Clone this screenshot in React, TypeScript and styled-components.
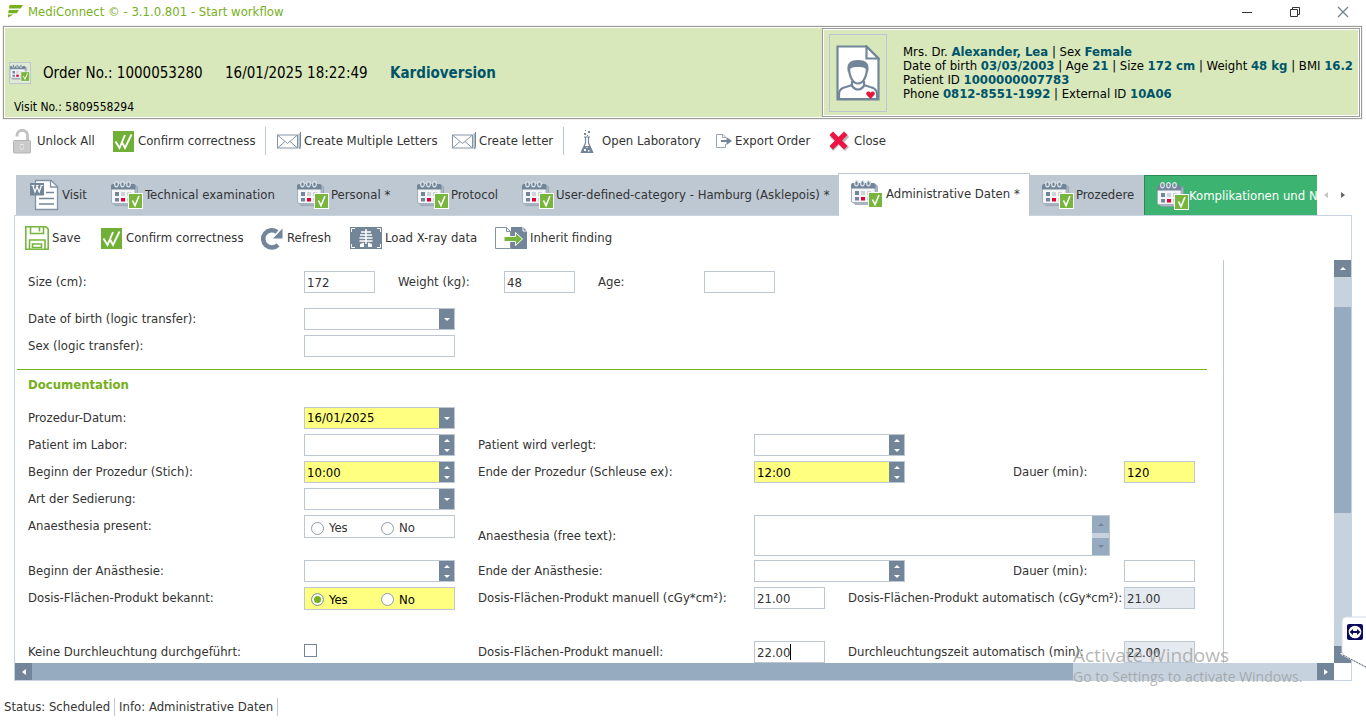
import React, { useState } from "react";
import styled, { createGlobalStyle, css } from "styled-components";

const c = {
  green: "#76b01c",
  iconGreen: "#77b53c",
  slate: "#738699",
  steel: "#96abc0",
  track: "#c6d2de",
  line: "#bcc7d2",
  tab: "#bdc8d3",
  header: "#d8e8bb",
  teal: "#00546a",
  text: "#333333",
  yellow: "#ffff80",
};

const Global = createGlobalStyle`
  *, *::before, *::after { box-sizing: border-box; }
  body {
    margin: 0;
    background: #ffffff;
    color: ${c.text};
    font-family: "DejaVu Sans Condensed", "DejaVu Sans", Tahoma, sans-serif;
    font-size: 13px;
    line-height: 18px;
  }
  button, input, select, textarea { font: inherit; color: inherit; margin: 0; }
  button { border: 0; padding: 0; background: none; cursor: pointer; }
  svg { display: block; flex: none; }
`;

const Page = styled.div`
  position: relative;
  display: flex;
  flex-direction: column;
  min-height: 100vh;
  overflow: hidden;
`;

/* ---------- title bar ---------- */

const TitleBar = styled.header`
  display: flex;
  align-items: center;
  height: 24px;
  padding: 0 17px 0 7px;
  color: ${c.green};
`;
const TitleText = styled.h1`
  flex: 1;
  margin: 0 0 0 5px;
  font-size: 13px;
  font-weight: 400;
`;
const WindowButtons = styled.div`
  display: flex;
  gap: 36px;
`;
const WindowButton = styled.button`
  width: 12px;
  height: 12px;
  color: #333;
`;

/* ---------- order header ---------- */

const framed = css`
  border: 1px solid #999c97;
  padding: 1px;
  box-shadow: inset 0 0 0 1px #ffffff;
  background: ${c.header};
`;
const OrderHeader = styled.section`
  ${framed}
  display: flex;
  height: 93px;
  margin: 2px 4px 0 3px;
  outline: 1px solid #f0f0f0;
  color: #000000;
`;
const OrderInfo = styled.div`
  flex: 1;
  min-width: 0;
`;
const OrderLine = styled.div`
  display: flex;
  align-items: center;
  height: 22px;
  margin: 34px 0 0 4px;
  font-size: 15px;
  line-height: 20px;
`;
const OrderIcon = styled.span`
  display: grid;
  place-items: center;
  width: 22px;
  height: 22px;
  margin-right: 12px;
  border: 1px solid ${c.line};
  background: #dfe9d3;
`;
const OrderNo = styled.span`
  width: 182px;
`;
const OrderDate = styled.span`
  width: 165px;
`;
const OrderName = styled.strong`
  color: ${c.teal};
`;
const VisitNo = styled.div`
  margin: 14px 0 0 9px;
  font-size: 12px;
`;
const PatientPanel = styled.aside`
  ${framed}
  display: flex;
  width: 538px;
`;
const PatientPhoto = styled.div`
  display: grid;
  place-items: center;
  width: 58px;
  height: 78px;
  margin: 4px 16px 0 5px;
  border: 1px solid ${c.line};
`;
const PatientLines = styled.div`
  padding-top: 15px;
  line-height: 14px;
  white-space: nowrap;

  b {
    color: ${c.teal};
  }
`;

/* ---------- toolbars ---------- */

const Toolbar = styled.nav<{ $start: number }>`
  display: flex;
  align-items: center;
  height: 44px;
  padding-left: ${(p) => p.$start}px;
`;
const ToolButton = styled.button<{ $width: number; $icon: number }>`
  display: grid;
  grid-template-columns: ${(p) => p.$icon}px 1fr;
  align-items: center;
  width: ${(p) => p.$width}px;
  height: 28px;
  text-align: left;
  white-space: nowrap;
`;
const Separator = styled.span`
  width: 1px;
  height: 28px;
  margin-right: 11px;
  background: ${c.line};
`;
const FlaskSlot = styled.span`
  padding-left: 5px;
`;

/* ---------- tabs ---------- */

const TabArea = styled.div`
  display: flex;
  align-items: flex-end;
  height: 42px;
  margin: 10px 14px 0 16px;
`;
const Tabs = styled.div`
  flex: 1;
  display: flex;
  align-items: flex-end;
  min-width: 0;
  height: 43px;
  margin-bottom: -1px;
  padding-bottom: 1px;
  overflow: hidden;
  position: relative;
`;
const Tab = styled.button<{ $width?: number; $active?: boolean; $accent?: boolean }>`
  display: flex;
  align-items: center;
  gap: 2px;
  height: 40px;
  padding-left: 12px;
  white-space: nowrap;
  background: ${c.tab};
  ${(p) => (p.$width ? `flex: 0 0 ${p.$width}px;` : "flex: 1 0 0; min-width: 0;")}
  ${(p) =>
    p.$active &&
    css`
      height: 43px;
      margin-bottom: -1px;
      padding-bottom: 3px;
      gap: 3px;
      background: #ffffff;
      border: 1px solid ${c.line};
      border-bottom: 0;
    `}
  ${(p) =>
    p.$accent &&
    css`
      gap: 0;
      background: #3cb371;
      color: #ffffff;
      border: 1px solid #2a8a54;
      border-width: 1px 0 0 1px;
    `}
`;
const DocSlot = styled.span`
  display: flex;
  justify-content: center;
  width: 32px;
`;
const TabArrows = styled.div`
  display: flex;
  gap: 11px;
  padding: 0 6px 16px;
`;
const ArrowButton = styled.button<{ $color: string }>`
  display: grid;
  place-items: center;
  width: 6px;
  height: 9px;
  color: ${(p) => p.$color};
`;

/* ---------- panel and scroll bars ---------- */

const Panel = styled.main`
  flex: 1;
  display: flex;
  flex-direction: column;
  margin: 0 14px;
  border: 1px solid ${c.track};
`;
const Scroller = styled.div`
  flex: 1;
  display: grid;
  grid-template-columns: minmax(0, 1fr) 17px;
  grid-template-rows: minmax(0, 1fr) 17px;
`;
const Viewport = styled.div`
  overflow: hidden;
`;
const ScrollTrack = styled.div<{ $vertical?: boolean }>`
  display: flex;
  flex-direction: ${(p) => (p.$vertical ? "column" : "row")};
  background: ${c.track};
`;
const ScrollLane = styled(ScrollTrack)`
  flex: 1;
`;
const ScrollSpace = styled.div<{ $size: number }>`
  flex: 0 0 ${(p) => p.$size}%;
`;
const Thumb = styled(ScrollSpace)`
  background: ${c.steel};
`;
const ScrollButton = styled.button<{ $muted?: boolean }>`
  display: grid;
  place-items: center;
  flex: none;
  width: 17px;
  height: 17px;
  background: ${(p) => (p.$muted ? c.steel : c.slate)};
  color: ${(p) => (p.$muted ? "#75869a" : "#ffffff")};
`;

/* ---------- form ---------- */

const Form = styled.form`
  width: 1209px;
  height: 100%;
  padding-top: 11px;
  border-right: 1px solid ${c.line};
`;
const BasicsGrid = styled.div`
  display: grid;
  grid-template-columns: 276px 94px 106px 94px 106px 71px;
  align-items: center;
  margin: 0 13px 15px;
`;
const FieldGrid = styled.div`
  display: grid;
  grid-template-columns: 276px 174px 276px 94px 165px 111px 71px;
  grid-auto-rows: 22px;
  row-gap: 5px;
  align-items: center;
  margin: 0 13px;
`;
/* The free-text row is taller than the others, so it has a grid of its own. */
const TallRow = styled(FieldGrid)`
  grid-auto-rows: 41px;
  margin-top: 5px;
  margin-bottom: 4px;
`;
const Cell = styled.div<{ $col: number; $span?: number; $row: number }>`
  grid-column: ${(p) => p.$col} / span ${(p) => p.$span ?? 1};
  grid-row: ${(p) => p.$row};
`;
const TopCell = styled(Cell)`
  align-self: start;
`;
const Label = styled.label`
  white-space: nowrap;
`;
const TopLabel = styled.span`
  display: block;
  line-height: 22px;
`;
const Section = styled.h2`
  margin: 12px 16px 5px 2px;
  padding: 6px 0 8px 11px;
  border-top: 1px solid ${c.green};
  color: ${c.green};
  font-size: 13px;
  line-height: 18px;
`;
const boxed = css`
  height: 22px;
  border: 1px solid ${c.line};
  border-radius: 0;
  background: #ffffff;
`;
const TextBox = styled.input<{ $wide?: boolean }>`
  ${boxed}
  display: block;
  width: ${(p) => (p.$wide ? 151 : 71)}px;
  padding: 0 2px;
  outline: 0;
  ${(p) => p.readOnly && "background: #e5eaf0;"}
`;
const Highlighted = styled(TextBox)`
  background: ${c.yellow};
  color: #000000;
`;
const Combo = styled.div<{ $required?: boolean }>`
  ${boxed}
  display: grid;
  grid-template-columns: 1fr 15px;
  width: 151px;
  ${(p) => p.$required && `background: ${c.yellow}; color: #000000;`}
`;
const comboField = css`
  width: 100%;
  height: 20px;
  padding: 0 2px;
  border: 0;
  outline: 0;
  background: transparent;
  appearance: none;
`;
const ComboSelect = styled.select`
  ${comboField}
  grid-area: 1 / 1 / 2 / 3;
`;
const ComboInput = styled.input`
  ${comboField}
`;
const ComboArrow = styled.span`
  grid-area: 1 / 2;
  display: grid;
  place-items: center;
  background: ${c.slate};
  color: #ffffff;
  pointer-events: none;
`;
const Spinner = styled.div`
  display: grid;
  grid-template-rows: 1fr 1fr;
  background: ${c.slate};
  color: #ffffff;
`;
const SpinButton = styled.button`
  display: grid;
  place-items: center;
`;
const RadioBox = styled.fieldset<{ $required?: boolean }>`
  ${boxed}
  display: flex;
  width: 151px;
  height: 23px;
  margin: 0;
  padding: 3px 0 0 6px;
  ${(p) => p.$required && `background: ${c.yellow}; color: #000000;`}
`;
const RadioLabel = styled.label`
  display: flex;
  align-items: center;
  gap: 5px;
  width: 70px;
`;
const Radio = styled.input`
  appearance: none;
  width: 13px;
  height: 13px;
  border: 1px solid #8d9bab;
  border-radius: 50%;
  background: #ffffff;

  &:checked {
    background: ${c.green};
    box-shadow: inset 0 0 0 2px #ffffff;
  }
`;
const CheckBox = styled.input`
  appearance: none;
  display: block;
  width: 13px;
  height: 13px;
  margin: 0 0 4px;
  border: 1px solid ${c.slate};
  background: #ffffff;
`;
const TextAreaBox = styled.div`
  display: grid;
  grid-template-columns: 1fr 17px;
  width: 356px;
  height: 41px;
  border: 1px solid ${c.line};
`;
const FreeText = styled.textarea`
  border: 0;
  outline: 0;
  resize: none;
  padding: 2px 3px;
`;
const TextAreaScroll = styled.div`
  display: flex;
  flex-direction: column;
  justify-content: space-between;
  background: ${c.track};
`;
const CaretHolder = styled.div`
  position: relative;
`;
const Caret = styled.span`
  position: absolute;
  left: 36px;
  top: 3px;
  width: 1px;
  height: 16px;
  background: #000000;
`;

/* ---------- status bar and overlays ---------- */

const StatusBar = styled.footer`
  display: flex;
  height: 22px;
  margin-top: 17px;
  padding-left: 4px;
`;
const StatusItem = styled.span`
  height: 18px;
  margin-right: 4px;
  padding-right: 4px;
  border-right: 1px solid ${c.line};
`;
const Watermark = styled.div`
  position: absolute;
  right: 57px;
  bottom: 32px;
  width: 236px;
  color: rgba(150, 150, 150, 0.7);
  font-family: "Open Sans", "Noto Sans", sans-serif;
  font-size: 14px;
  line-height: 22px;
  white-space: nowrap;
  pointer-events: none;
`;
const WatermarkTitle = styled.div`
  font-size: 19px;
`;
const SideTab = styled.button`
  position: absolute;
  right: 0;
  bottom: 51px;
`;

/* ---------- icons ---------- */

const Logo = () => (
  <svg width="16" height="14" viewBox="0 0 16 14" fill={c.green}>
    <path d="M2.500 0H16l-2.400 3.500H2z" />
    <path d="M1.700 5H12L9.700 8.300H1.200z" />
    <path d="M1 9.500h5.500L1 12.500z" />
  </svg>
);

const Calendar = ({ width = 32 }: { width?: number }) => (
  <svg width={width} height={(width * 28) / 32} viewBox="0 0 32 28">
    <path d="M24 4l2.500 2v15l-2 3.500H4L1 21z" fill="#aab6c4" stroke="#8796a6" strokeWidth=".6" />
    <rect x=".5" y="4" width="23.500" height="18.500" rx="1.500" fill="#f4f5f7" stroke="#a5b1bf" />
    <path d="M0 8.500V5q0-2 2-2h20.500q2 0 2 2v3.500z" fill={c.slate} />
    {[5.5, 11.5, 17.5].map((x) => (
      <ellipse key={x} cx={x} cy="3.300" rx="1.800" ry="2.600" fill={c.slate} stroke="#dfe5ea" strokeWidth="1.200" />
    ))}
    <path d="M4 11h4v4H4zM4 17h4v3.500H4z" fill={c.slate} />
    <path d="M10 11h4v4h-4zM16 11h4v4h-4zM16 17h4v3.500h-4z" fill="#ccd3db" />
    <path d="M10 17h4v3.500h-4z" fill="#e4003a" />
    <rect x="17.500" y="12.500" width="14" height="15" fill={c.iconGreen} stroke="#fff" />
    <path d="M21.500 19.500l2.500 5 4-9.500" fill="none" stroke="#fff" strokeWidth="1.600" />
  </svg>
);

const DoubleCheck = () => (
  <svg width="21" height="21" viewBox="0 0 21 21">
    <path d="M0 0h21v21H0z" fill="#71b036" />
    <path d="M2.500 10.500L6.500 17 12 4M8.500 10.500l3.500 6.500L18.500 3.500" fill="none" stroke="#fff" strokeWidth="1.900" />
  </svg>
);

const Padlock = () => (
  <svg width="19" height="25" viewBox="0 0 19 25">
    <path d="M4 7.500V6.500a5 5 0 0 1 10.500 0V12" fill="none" stroke="#c2c2c2" strokeWidth="2.800" />
    <rect x=".5" y="11.500" width="17" height="12.500" rx="1" fill="#cacaca" stroke="#b3b3b3" />
    <path d="M7.500 15h3v5.500h-3z" fill="#efefef" />
    <path d="M8.500 16h1v3.500h-1z" fill="#999" />
  </svg>
);

const Letter = () => (
  <svg width="25" height="20" viewBox="0 0 25 20" fill="none" stroke="#8394a5">
    <path d="M.5 4h20v13H.5zM.5 4l10 8.500L20.500 4M.5 17L8 10.500M20.500 17L13 10.500" />
    <path d="M22.500 2.500v15" stroke="#b5bfca" strokeWidth="2.500" />
    <path d="M23.500 1v14l-1 3" stroke={c.slate} />
  </svg>
);

const Flask = () => (
  <svg width="14" height="25" viewBox="0 0 14 25">
    <path d="M4 8h6M5.500 8v6L1.500 23h11L8.500 14V8" fill="#fff" stroke={c.slate} strokeWidth="1.200" />
    <path d="M4 17h6l3.500 7H.5z" fill={c.slate} />
    <path d="M5 1h1v1H5zM8 2h2v2H8zM4 4h2v2H4zM7 6h1v1H7z" fill={c.slate} />
    <path d="M4 20h2v2H4zM8 21h1.500v1.500H8zM6.500 18h1v1h-1z" fill="#fff" />
  </svg>
);

const Export = () => (
  <svg width="16" height="14" viewBox="0 0 16 14">
    <path d="M9.500 4V3L7 .5H.5v13h9V10M6.500 .5v3h3" fill="none" stroke="#98a6b4" />
    <path d="M5 6h5.500V3L16 7l-5.500 4V8H5z" fill={c.slate} />
  </svg>
);

const RedCross = () => (
  <svg width="21" height="21" viewBox="0 0 21 21">
    <path d="M5 2l6 6 6-6 3 4-5 5 5 5-4 4-6-6-6 6-3-4 5-5-5-5z" fill="#b9b9b9" />
    <path d="M4 .5l5.500 5.500L15 .5 18.500 4 13 9.500l5.500 5.500-3.500 3.500-5.500-5.500L4 18.500.5 15 6 9.500.5 4z" fill="#ee1245" />
  </svg>
);

const WordDoc = () => (
  <svg width="29" height="32" viewBox="0 0 29 32">
    <path d="M5.500 1.500H21l6.500 6v23h-22z" fill="#fff" stroke="#8293a5" strokeWidth="1.300" />
    <path d="M20.500 1.500v6.500h7" fill="none" stroke="#8293a5" strokeWidth="1.300" />
    <path d="M16 13.500h8M9 19.500h15M9 25h15" stroke={c.slate} strokeWidth="1.700" />
    <path d="M0 4h14v12.500H0z" fill={c.slate} />
    <path d="M1.500 6.500h3M6 6.500h2.500M10.500 6.500h2.500M3 7l2 6 2-5.500L9.200 13l2-6" fill="none" stroke="#fff" strokeWidth="1.200" />
  </svg>
);

const Floppy = () => (
  <svg width="24" height="24" viewBox="0 0 24 24" fill="none" stroke={c.iconGreen} strokeWidth="1.600">
    <path d="M.8 .8h20l2.400 2.400v20H.8z" />
    <path d="M5.500 1v6.500h13V1M14.500 1v4.500" />
    <path d="M4.500 23v-9h15.500V23M7.500 18h9v3.500h-9z" />
  </svg>
);

const Refresh = () => (
  <svg width="24" height="23" viewBox="0 0 24 23">
    <path d="M18 17.800A8.600 8.600 0 1 1 17 5" fill="none" stroke={c.slate} strokeWidth="4.600" />
    <path d="M22.500 1.500V11.500H13z" fill={c.slate} />
  </svg>
);

const Xray = () => (
  <svg width="32" height="22" viewBox="0 0 32 22">
    <path d="M0 0h32v22H0z" fill={c.slate} />
    <path d="M1.500 5V1.500H5M27 1.500h3.500V5M1.500 17v3.500H5M27 20.500h3.500V17" fill="none" stroke="#fff" />
    <path d="M16 2v15M11 5h10M10 8h12M9.500 11h13M9.500 14h13" stroke="#fff" strokeWidth="1.500" />
    <path d="M10 20v-3l4-1.500V20zM22 20v-3l-4-1.500V20z" fill="#fff" />
  </svg>
);

const Inherit = () => (
  <svg width="32" height="22" viewBox="0 0 32 22">
    <path d="M.5 .5h11l4 4v17H.5z" fill="#fff" stroke="#8394a5" />
    <path d="M11.500 .5v4h4" fill="none" stroke="#8394a5" />
    <path d="M16 0h12l4 4v18H16z" fill={c.slate} />
    <path d="M28 0v4h4" fill="none" stroke="#fff" />
    <path d="M9 9.500h11.500V5.500l7 6.500-7 6.500v-4H9z" fill={c.iconGreen} stroke="#fff" />
  </svg>
);

const Portrait = () => (
  <svg width="44" height="56" viewBox="0 0 44 56" stroke={c.slate} strokeWidth="2.200">
    <path d="M1.500 1.500h29l12 12v41h-41z" fill="#fff" />
    <path d="M30.500 1.500v12h12z" fill="#fff" />
    <path d="M3 54V48q1-5 7-6l6-2h12l6 2q6 1 7 6v6z" fill="#fff" />
    <path d="M16 36v5q6 7 12 0v-5" fill="#fff" />
    <path d="M13 22c0 10 4 16.500 9 16.500S31 32 31 22" fill="#fff" />
    <path d="M12 28c-2-9 1-13 10-13s12 4 10 13c-1-5-4-6-10-6s-9 1-10 6z" fill={c.slate} stroke="none" />
    <path d="M34.500 54l-4-4.200c-1.500-3 2.500-4.500 4-2 1.500-2.500 5.500-1 4 2z" fill="#e8143c" stroke="none" />
  </svg>
);

const TeamTab = () => (
  <svg width="25" height="53" viewBox="0 0 25 53">
    <path d="M26 1H5Q1 1 1 5v31q0 3 3 4.500L26 52" fill="#fff" stroke="#d5dce4" />
    <path d="M2 39l23 12" stroke="#667" strokeWidth="1" strokeDasharray="2 1" />
    <rect x="6" y="8" width="16" height="16" rx="2" fill="#0b0b5e" />
    <circle cx="14" cy="16" r="6.300" fill="#fff" />
    <path d="M8.500 16l3.500-3v2h4v-2l3.500 3-3.500 3v-2h-4v2z" fill="#0b0b5e" />
  </svg>
);

type Dir = "up" | "down" | "left" | "right";
const trianglePaths: Record<Dir, [number, number, string]> = {
  up: [6, 3, "M0 3L3 0l3 3z"],
  down: [6, 3, "M0 0h6L3 3z"],
  left: [4, 6, "M4 0v6L0 3z"],
  right: [4, 6, "M0 0l4 3-4 3z"],
};
const Triangle = ({ dir }: { dir: Dir }) => {
  const [w, h, d] = trianglePaths[dir];
  return (
    <svg width={w} height={h} viewBox={`0 0 ${w} ${h}`} fill="currentColor">
      <path d={d} />
    </svg>
  );
};

/* ---------- form parts ---------- */

type FieldProps = { id: string; value?: string; required?: boolean };

const SelectField = ({ id, value, required }: FieldProps) => (
  <Combo $required={required}>
    <ComboSelect id={id} defaultValue={value ?? ""}>
      <option>{value ?? ""}</option>
    </ComboSelect>
    <ComboArrow>
      <Triangle dir="down" />
    </ComboArrow>
  </Combo>
);

const TimeField = ({ id, value, required }: FieldProps) => (
  <Combo $required={required}>
    <ComboInput id={id} defaultValue={value ?? ""} />
    <Spinner>
      <SpinButton type="button" aria-label="Later">
        <Triangle dir="up" />
      </SpinButton>
      <SpinButton type="button" aria-label="Earlier">
        <Triangle dir="down" />
      </SpinButton>
    </Spinner>
  </Combo>
);

const YesNo = ({ name, label, value, required }: { name: string; label: string; value?: string; required?: boolean }) => (
  <RadioBox $required={required} aria-label={label}>
    {["Yes", "No"].map((option) => (
      <RadioLabel key={option}>
        <Radio type="radio" name={name} value={option} defaultChecked={value === option} />
        {option}
      </RadioLabel>
    ))}
  </RadioBox>
);

const FieldLabel = ({ row, col, span, id, children }: { row: number; col: number; span?: number; id?: string; children: React.ReactNode }) => (
  <Cell $row={row} $col={col} $span={span}>
    <Label htmlFor={id}>{children}</Label>
  </Cell>
);

const tabs = [
  { label: "Visit", width: 83, icon: "doc" },
  { label: "Technical examination", width: 186 },
  { label: "Personal *", width: 120 },
  { label: "Protocol", width: 105 },
  { label: "User-defined-category - Hamburg (Asklepois) *", width: 328 },
  { label: "Administrative Daten *", width: 192 },
  { label: "Prozedere", width: 114 },
  { label: "Komplikationen und N", accent: true },
];

export default function App() {
  const [active, setActive] = useState(5);

  return (
    <Page>
      <Global />
      <TitleBar>
        <Logo />
        <TitleText>MediConnect © - 3.1.0.801 - Start workflow</TitleText>
        <WindowButtons>
          <WindowButton aria-label="Minimize">
            <svg width="12" height="12" stroke="currentColor"><path d="M1 6.500h10" /></svg>
          </WindowButton>
          <WindowButton aria-label="Restore">
            <svg width="12" height="12" stroke="currentColor" fill="none"><path d="M1.500 3.500h7v7h-7zM3.500 3.500v-2h7v7h-2" /></svg>
          </WindowButton>
          <WindowButton aria-label="Close window">
            <svg width="12" height="12" stroke={c.slate} strokeWidth="1.400"><path d="M1 1l10 10M11 1L1 11" /></svg>
          </WindowButton>
        </WindowButtons>
      </TitleBar>

      <OrderHeader>
        <OrderInfo>
          <OrderLine>
            <OrderIcon><Calendar width={20} /></OrderIcon>
            <OrderNo>Order No.: 1000053280</OrderNo>
            <OrderDate>16/01/2025 18:22:49</OrderDate>
            <OrderName>Kardioversion</OrderName>
          </OrderLine>
          <VisitNo>Visit No.: 5809558294</VisitNo>
        </OrderInfo>
        <PatientPanel>
          <PatientPhoto><Portrait /></PatientPhoto>
          <PatientLines>
            <div>Mrs. Dr. <b>Alexander, Lea</b> | Sex <b>Female</b></div>
            <div>Date of birth <b>03/03/2003</b> | Age <b>21</b> | Size <b>172 cm</b> | Weight <b>48 kg</b> | BMI <b>16.2</b></div>
            <div>Patient ID <b>1000000007783</b></div>
            <div>Phone <b>0812-8551-1992</b> | External ID <b>10A06</b></div>
          </PatientLines>
        </PatientPanel>
      </OrderHeader>

      <Toolbar $start={13} aria-label="Order">
        <ToolButton $width={100} $icon={24}><Padlock />Unlock All</ToolButton>
        <ToolButton $width={152} $icon={25}><DoubleCheck />Confirm correctness</ToolButton>
        <Separator />
        <ToolButton $width={175} $icon={27}><Letter />Create Multiple Letters</ToolButton>
        <ToolButton $width={111} $icon={27}><Letter />Create letter</ToolButton>
        <Separator />
        <ToolButton $width={141} $icon={27}><FlaskSlot><Flask /></FlaskSlot>Open Laboratory</ToolButton>
        <ToolButton $width={113} $icon={19}><Export />Export Order</ToolButton>
        <ToolButton $width={70} $icon={25}><RedCross />Close</ToolButton>
      </Toolbar>

      <TabArea>
        <Tabs role="tablist">
          {tabs.map((tab, i) => (
            <Tab
              key={tab.label}
              role="tab"
              aria-selected={i === active}
              $width={tab.width}
              $active={i === active}
              $accent={tab.accent}
              onClick={() => setActive(i)}
            >
              {tab.icon ? <DocSlot><WordDoc /></DocSlot> : <Calendar />}
              {tab.label}
            </Tab>
          ))}
        </Tabs>
        <TabArrows>
          <ArrowButton aria-label="Previous tabs" $color="#c4c4c4"><Triangle dir="left" /></ArrowButton>
          <ArrowButton aria-label="Next tabs" $color="#666666"><Triangle dir="right" /></ArrowButton>
        </TabArrows>
      </TabArea>

      <Panel>
        <Toolbar $start={10} aria-label="Form">
          <ToolButton $width={76} $icon={27}><Floppy />Save</ToolButton>
          <ToolButton $width={159} $icon={25}><DoubleCheck />Confirm correctness</ToolButton>
          <ToolButton $width={90} $icon={27}><Refresh />Refresh</ToolButton>
          <ToolButton $width={145} $icon={35}><Xray />Load X-ray data</ToolButton>
          <ToolButton $width={120} $icon={35}><Inherit />Inherit finding</ToolButton>
        </Toolbar>

        <Scroller>
          <Viewport>
            <Form>
              <BasicsGrid>
                <Label htmlFor="size">Size (cm):</Label>
                <TextBox id="size" defaultValue="172" />
                <Label htmlFor="weight">Weight (kg):</Label>
                <TextBox id="weight" defaultValue="48" />
                <Label htmlFor="age">Age:</Label>
                <TextBox id="age" />
              </BasicsGrid>
              <FieldGrid>
                <FieldLabel row={1} col={1} id="dob">Date of birth (logic transfer):</FieldLabel>
                <Cell $row={1} $col={2}><SelectField id="dob" /></Cell>
                <FieldLabel row={2} col={1} id="sex">Sex (logic transfer):</FieldLabel>
                <Cell $row={2} $col={2}><TextBox id="sex" $wide /></Cell>
              </FieldGrid>

              <Section>Documentation</Section>

              <FieldGrid>
                <FieldLabel row={1} col={1} id="date">Prozedur-Datum:</FieldLabel>
                <Cell $row={1} $col={2}><SelectField id="date" value="16/01/2025" required /></Cell>

                <FieldLabel row={2} col={1} id="lab">Patient im Labor:</FieldLabel>
                <Cell $row={2} $col={2}><TimeField id="lab" /></Cell>
                <FieldLabel row={2} col={3} id="moved">Patient wird verlegt:</FieldLabel>
                <Cell $row={2} $col={4} $span={2}><TimeField id="moved" /></Cell>

                <FieldLabel row={3} col={1} id="start">Beginn der Prozedur (Stich):</FieldLabel>
                <Cell $row={3} $col={2}><TimeField id="start" value="10:00" required /></Cell>
                <FieldLabel row={3} col={3} id="end">Ende der Prozedur (Schleuse ex):</FieldLabel>
                <Cell $row={3} $col={4} $span={2}><TimeField id="end" value="12:00" required /></Cell>
                <FieldLabel row={3} col={6} id="duration">Dauer (min):</FieldLabel>
                <Cell $row={3} $col={7}><Highlighted id="duration" defaultValue="120" /></Cell>

                <FieldLabel row={4} col={1} id="sedation">Art der Sedierung:</FieldLabel>
                <Cell $row={4} $col={2}><SelectField id="sedation" /></Cell>
              </FieldGrid>

              <TallRow>
                <TopCell $row={1} $col={1}><TopLabel>Anaesthesia present:</TopLabel></TopCell>
                <TopCell $row={1} $col={2}><YesNo name="anaesthesia" label="Anaesthesia present" /></TopCell>
                <FieldLabel row={1} col={3} id="freetext">Anaesthesia (free text):</FieldLabel>
                <Cell $row={1} $col={4} $span={4}>
                  <TextAreaBox>
                    <FreeText id="freetext" />
                    <TextAreaScroll>
                      <ScrollButton type="button" $muted aria-label="Scroll text up"><Triangle dir="up" /></ScrollButton>
                      <ScrollButton type="button" $muted aria-label="Scroll text down"><Triangle dir="down" /></ScrollButton>
                    </TextAreaScroll>
                  </TextAreaBox>
                </Cell>
              </TallRow>

              <FieldGrid>
                <FieldLabel row={1} col={1} id="anStart">Beginn der Anästhesie:</FieldLabel>
                <Cell $row={1} $col={2}><TimeField id="anStart" /></Cell>
                <FieldLabel row={1} col={3} id="anEnd">Ende der Anästhesie:</FieldLabel>
                <Cell $row={1} $col={4} $span={2}><TimeField id="anEnd" /></Cell>
                <FieldLabel row={1} col={6} id="anDuration">Dauer (min):</FieldLabel>
                <Cell $row={1} $col={7}><TextBox id="anDuration" /></Cell>

                <FieldLabel row={2} col={1}>Dosis-Flächen-Produkt bekannt:</FieldLabel>
                <Cell $row={2} $col={2}><YesNo name="dose" label="Dosis-Flächen-Produkt bekannt" value="Yes" required /></Cell>
                <FieldLabel row={2} col={3} id="doseManual">Dosis-Flächen-Produkt manuell (cGy*cm²):</FieldLabel>
                <Cell $row={2} $col={4}><TextBox id="doseManual" defaultValue="21.00" /></Cell>
                <FieldLabel row={2} col={5} span={2} id="doseAuto">Dosis-Flächen-Produkt automatisch (cGy*cm²):</FieldLabel>
                <Cell $row={2} $col={7}><TextBox id="doseAuto" readOnly defaultValue="21.00" /></Cell>

                <FieldLabel row={4} col={1} id="noScreening">Keine Durchleuchtung durchgeführt:</FieldLabel>
                <Cell $row={4} $col={2}><CheckBox type="checkbox" id="noScreening" /></Cell>
                <FieldLabel row={4} col={3} id="dose2">Dosis-Flächen-Produkt manuell:</FieldLabel>
                <Cell $row={4} $col={4}>
                  <CaretHolder>
                    <TextBox id="dose2" defaultValue="22.00" />
                    <Caret />
                  </CaretHolder>
                </Cell>
                <FieldLabel row={4} col={5} span={2} id="screenTime">Durchleuchtungszeit automatisch (min):</FieldLabel>
                <Cell $row={4} $col={7}><TextBox id="screenTime" readOnly defaultValue="22.00" /></Cell>
              </FieldGrid>
            </Form>
          </Viewport>

          <ScrollTrack $vertical>
            <ScrollButton aria-label="Scroll up"><Triangle dir="up" /></ScrollButton>
            <ScrollLane $vertical>
              <ScrollSpace $size={8} />
              <Thumb $size={56} />
            </ScrollLane>
            <ScrollButton aria-label="Scroll down"><Triangle dir="down" /></ScrollButton>
          </ScrollTrack>
          <ScrollTrack>
            <ScrollButton aria-label="Scroll left"><Triangle dir="left" /></ScrollButton>
            <ScrollLane>
              <Thumb $size={81} />
            </ScrollLane>
            <ScrollButton aria-label="Scroll right"><Triangle dir="right" /></ScrollButton>
          </ScrollTrack>
        </Scroller>
      </Panel>

      <StatusBar>
        <StatusItem>Status: Scheduled</StatusItem>
        <StatusItem>Info: Administrative Daten</StatusItem>
      </StatusBar>

      <Watermark>
        <WatermarkTitle>Activate Windows</WatermarkTitle>
        <div>Go to Settings to activate Windows.</div>
      </Watermark>
      <SideTab aria-label="Remote support"><TeamTab /></SideTab>
    </Page>
  );
}
